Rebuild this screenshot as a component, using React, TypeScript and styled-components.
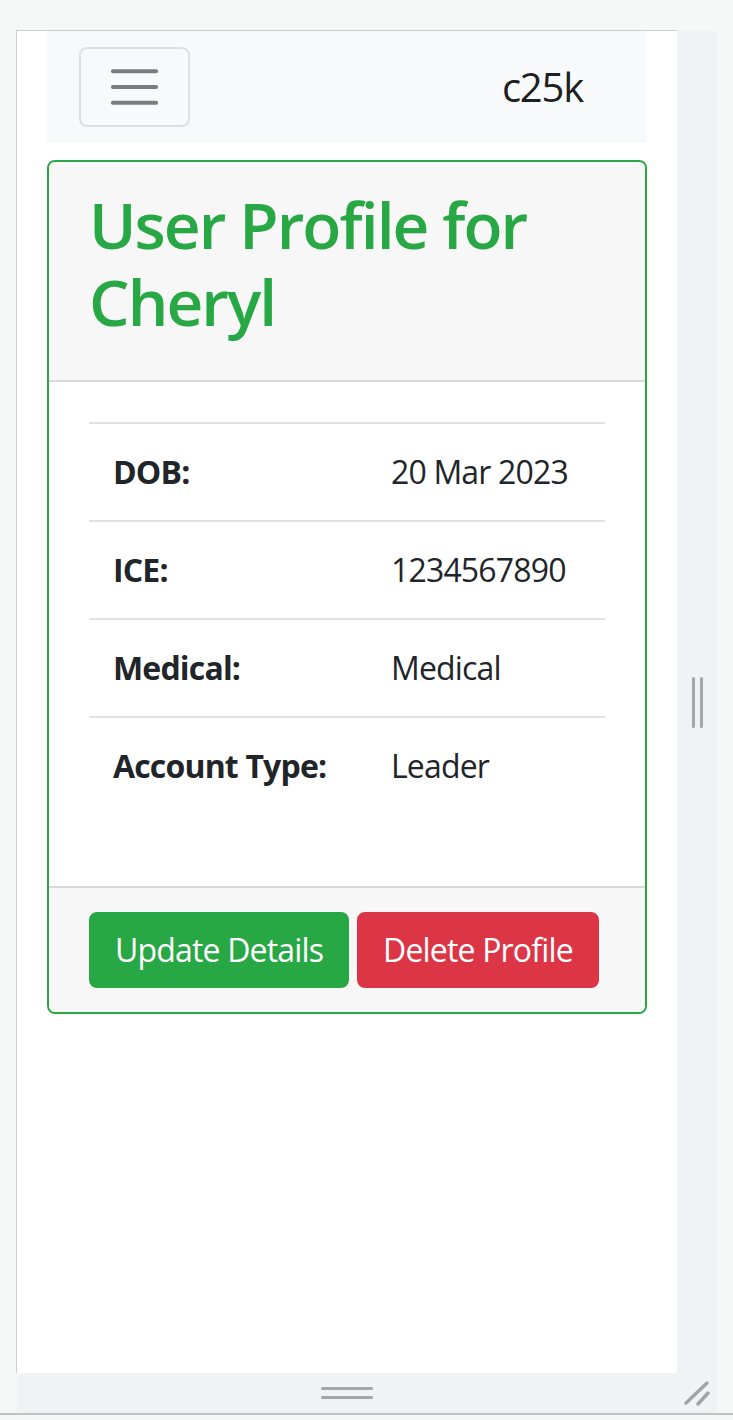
import styled, { createGlobalStyle } from "styled-components";

const GlobalStyle = createGlobalStyle`
  html, body {
    margin: 0;
    padding: 0;
    background: #f6f7f7;
  }
  * {
    box-sizing: border-box;
  }
`;

const Shell = styled.div`
  display: flex;
  flex-direction: column;
  padding: 30px 0 0 16px;
  height: 1420px;
  overflow: hidden;
`;

const TopRow = styled.div`
  display: flex;
`;

const Viewport = styled.div`
  width: 661px;
  height: 1343px;
  background: #ffffff;
  border-top: 1px solid #cfcfcf;
  border-left: 1px solid #cfcfcf;
  font-family: "Open Sans", "Noto Sans", sans-serif;
  color: #212529;
`;

const RightRail = styled.div`
  width: 40px;
  margin-top: 1px;
  background: #f1f2f4;
  display: flex;
  align-items: center;
  justify-content: center;
  gap: 5px;
`;

const VBar = styled.span`
  width: 3px;
  height: 51px;
  border-radius: 2px;
  background: #a6a6a6;
`;

const BottomRail = styled.div`
  margin-left: 1px;
  width: 700px;
  height: 40px;
  background: #f1f2f4;
  display: grid;
  grid-template-columns: 660px 40px;
`;

const RailCell = styled.div`
  display: flex;
  flex-direction: column;
  align-items: center;
  justify-content: center;
  gap: 6px;
`;

const HBar = styled.span`
  width: 52px;
  height: 3px;
  border-radius: 2px;
  background: #a6a6a6;
`;

const BottomLine = styled.div`
  margin-left: -16px;
  height: 2px;
  background: #c2c2c2;
`;

const Container = styled.div`
  padding: 0 30px;
`;

const Navbar = styled.nav`
  display: flex;
  align-items: center;
  justify-content: space-between;
  padding: 16px 32px;
  background: #f8f9fa;
`;

const Toggler = styled.button`
  width: 111px;
  height: 80px;
  padding: 8px 24px;
  background: transparent;
  border: 2px solid rgba(0, 0, 0, 0.1);
  border-radius: 8px;
  display: flex;
  align-items: center;
  justify-content: center;
`;

const Brand = styled.span`
  font-size: 40px;
  line-height: 60px;
  padding: 10px 0;
  margin-right: 32px;
  letter-spacing: -0.03em;
  color: rgba(0, 0, 0, 0.9);
`;

const Card = styled.section`
  margin-top: 17px;
  border: 2px solid #28a745;
  border-radius: 8px;
  overflow: hidden;
`;

const CardHeader = styled.header`
  padding: 24px 40px;
  background: #f7f7f7;
  border-bottom: 2px solid #dadada;
`;

const Title = styled.h2`
  margin: 0 0 16px;
  font-size: 64px;
  line-height: 77px;
  font-weight: 600;
  letter-spacing: -0.03em;
  color: #28a745;
`;

const CardBody = styled.div`
  padding: 40px;
`;

const Table = styled.table`
  width: 100%;
  border-collapse: collapse;
  margin-bottom: 32px;
`;

const Row = styled.tr`
  border-top: 2px solid #dee2e6;
`;

const Label = styled.th`
  width: 278px;
  padding: 24px;
  text-align: left;
  font-size: 32px;
  line-height: 48px;
  font-weight: 700;
  letter-spacing: -0.026em;
`;

const Value = styled.td`
  padding: 24px;
  font-size: 32px;
  line-height: 48px;
  letter-spacing: -0.026em;
`;

const CardFooter = styled.footer`
  display: flex;
  gap: 8px;
  padding: 24px 40px;
  background: #f7f7f7;
  border-top: 2px solid #dadada;
`;

const Button = styled.button<{ $tone: "success" | "danger" }>`
  padding: 12px 24px;
  font-family: inherit;
  letter-spacing: -0.026em;
  font-size: 32px;
  line-height: 48px;
  white-space: nowrap;
  color: #ffffff;
  border: 2px solid ${(p) => (p.$tone === "success" ? "#28a745" : "#dc3545")};
  background: ${(p) => (p.$tone === "success" ? "#28a745" : "#dc3545")};
  border-radius: 8px;
`;

const details = [
  { label: "DOB:", value: "20 Mar 2023" },
  { label: "ICE:", value: "1234567890" },
  { label: "Medical:", value: "Medical" },
  { label: "Account Type:", value: "Leader" },
];

export default function App() {
  return (
    <>
      <GlobalStyle />
      <Shell>
        <TopRow>
          <Viewport>
            <Container>
              <Navbar>
                <Toggler aria-label="Toggle navigation">
                  <svg width="60" height="60" viewBox="0 0 30 30">
                    <path
                      d="M4 7h22M4 15h22M4 23h22"
                      stroke="rgba(0,0,0,0.5)"
                      strokeWidth="2"
                      strokeLinecap="round"
                    />
                  </svg>
                </Toggler>
                <Brand>c25k</Brand>
              </Navbar>

              <Card>
                <CardHeader>
                  <Title>User Profile for Cheryl</Title>
                </CardHeader>
                <CardBody>
                  <Table>
                    <tbody>
                      {details.map((d) => (
                        <Row key={d.label}>
                          <Label>{d.label}</Label>
                          <Value>{d.value}</Value>
                        </Row>
                      ))}
                    </tbody>
                  </Table>
                </CardBody>
                <CardFooter>
                  <Button $tone="success">Update Details</Button>
                  <Button $tone="danger">Delete Profile</Button>
                </CardFooter>
              </Card>
            </Container>
          </Viewport>
          <RightRail>
            <VBar />
            <VBar />
          </RightRail>
        </TopRow>
        <BottomRail>
          <RailCell>
            <HBar />
            <HBar />
          </RailCell>
          <RailCell>
            <svg width="28" height="28" viewBox="0 0 28 28">
              <path
                d="M3 24L24 4M15 25L25 14"
                stroke="#a3a3a3"
                strokeWidth="3.5"
                strokeLinecap="round"
              />
            </svg>
          </RailCell>
        </BottomRail>
        <BottomLine />
      </Shell>
    </>
  );
}
